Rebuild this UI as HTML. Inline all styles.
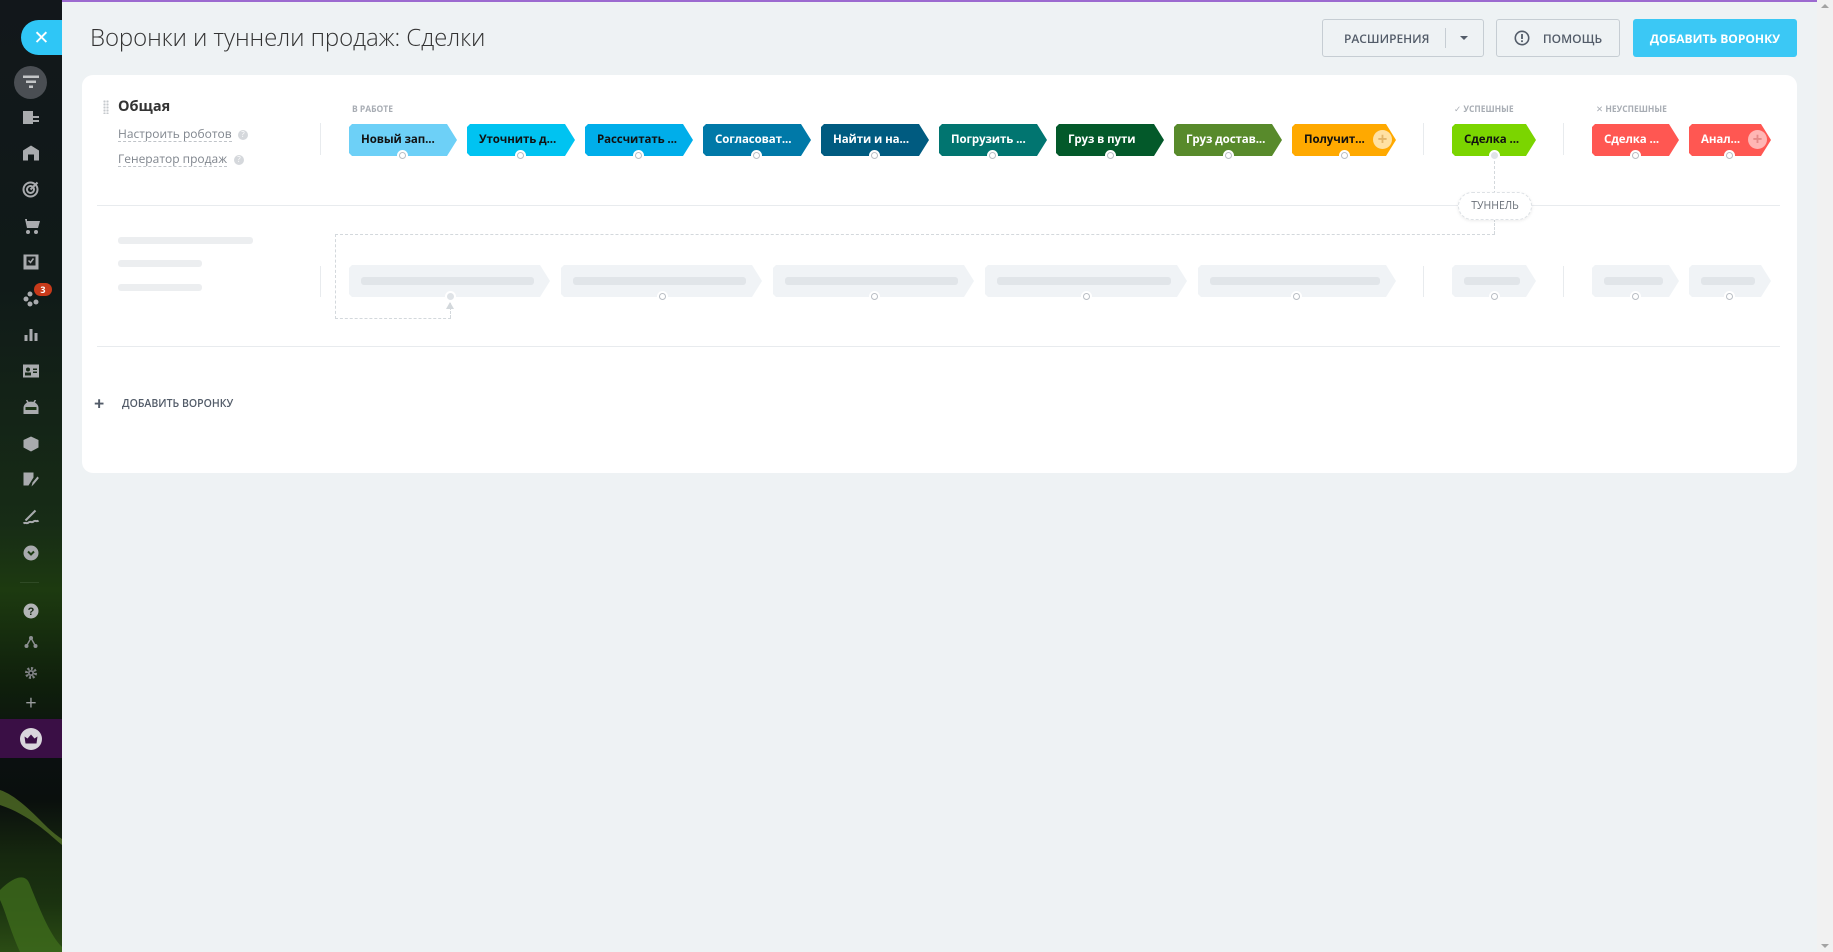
<!DOCTYPE html>
<html><head><meta charset="utf-8">
<style>
*{box-sizing:border-box;margin:0;padding:0}
body{width:1833px;height:952px;overflow:hidden;background:#eef2f4;font-family:"Open Sans","Liberation Sans","DejaVu Sans",sans-serif;position:relative}
.sb{position:absolute;left:0;top:0;width:62px;height:952px;background:linear-gradient(180deg,#12171b 0%,#101a18 30%,#172c16 55%,#1d3a10 62%,#0f1f0c 72%,#0b1010 80%,#0a0f0d 84%,#16280f 90%,#1b3310 95%,#2b4c14 100%);}
.ic{position:absolute;left:31px;transform:translate(-50%,-50%);color:#a9abae;}
.top{position:absolute;left:62px;top:0;right:0;height:2px;background:#9c6ad0}
.title{position:absolute;left:90px;top:21px;font-size:24px;color:#333;font-weight:300;letter-spacing:-0.1px}
.btn{position:absolute;top:19px;height:38px;border-radius:3px;font-size:12px;font-weight:bold;display:flex;align-items:center;justify-content:center;color:#535c69}
.card{position:absolute;left:82px;top:75px;width:1715px;height:398px;background:#fff;border-radius:11px}
.abs{position:absolute}
.st{position:absolute;height:32px;top:124px;clip-path:polygon(0 3px,3px 0,calc(100% - 10px) 0,100% 50%,calc(100% - 10px) 100%,3px 100%,0 calc(100% - 3px));font-size:11.5px;font-weight:bold;line-height:32px;padding-left:12px;white-space:nowrap;color:#fff;border-radius:3px;letter-spacing:-0.1px}
.node{position:absolute;width:11px;height:11px;border-radius:50%;background:#fff;border:2px solid #fff}
.node::after{content:"";position:absolute;left:0;top:0;width:7px;height:7px;border-radius:50%;border:1px solid #b9bec4;box-sizing:border-box}
.ph{position:absolute;top:265px;height:32px;background:#f0f3f6;clip-path:polygon(0 3px,3px 0,calc(100% - 10px) 0,100% 50%,calc(100% - 10px) 100%,3px 100%,0 calc(100% - 3px))}
.ph i{position:absolute;left:12px;right:16px;top:12px;height:8px;background:#e1e5e9;border-radius:3px}
.lbl{position:absolute;top:104px;font-size:8.5px;color:#a8adb4;font-weight:bold}
.vd{position:absolute;width:1px;background:#e8ebee}
.bar{position:absolute;height:7px;background:#eceef0;border-radius:3px;left:118px}
.plus{position:absolute;width:19px;height:19px;border-radius:50%;top:130px;font-size:17px;line-height:18px;text-align:center;font-weight:bold}
</style></head><body>
<div class="sb">
  <div style="position:absolute;left:21px;top:20px;width:41px;height:35px;border-radius:18px 0 0 18px;background:#2fc6f6;color:#fff;font-size:19px;line-height:34px;text-align:center;padding-left:0px;">✕</div>
  <div style="position:absolute;left:14px;top:66px;width:33px;height:33px;border-radius:50%;background:#4a4e53"></div>
  <svg class="ic" style="top:82px" width="16" height="13" viewBox="0 0 16 13"><rect x="0" y="0" width="16" height="2.5" fill="#c4c6c8"/><rect x="3" y="5" width="10" height="2.5" fill="#c4c6c8"/><rect x="6" y="10" width="4" height="2.5" fill="#c4c6c8"/></svg>
  <svg class="ic" style="top:117px" width="16" height="16" viewBox="0 0 16 16" fill="#a9abae"><rect x="0" y="2" width="10" height="13"/><rect x="6" y="7" width="10" height="2"/><rect x="6" y="11" width="10" height="2"/></svg>
  <svg class="ic" style="top:153px" width="16" height="15" viewBox="0 0 16 15" fill="#a9abae"><path d="M0 5 8 0 16 5V15H11V9H5V15H0Z"/></svg>
  <svg class="ic" style="top:189px" width="17" height="17" viewBox="0 0 17 17" fill="none" stroke="#a9abae" stroke-width="2"><circle cx="8" cy="9" r="7"/><circle cx="8" cy="9" r="3.5"/><path d="M8 9 15 2"/></svg>
  <svg class="ic" style="top:226px" width="18" height="16" viewBox="0 0 18 16" fill="#a9abae"><path d="M0 1h3l2 9h11l2-7H5V1z"/><circle cx="6" cy="14" r="2"/><circle cx="14" cy="14" r="2"/></svg>
  <svg class="ic" style="top:262px" width="15" height="15" viewBox="0 0 15 15"><rect width="15" height="15" fill="#a9abae"/><rect x="3" y="2" width="9" height="9" fill="#1a2020"/><path d="M5 6l2 2 3-4" stroke="#a9abae" stroke-width="1.5" fill="none"/></svg>
  <svg class="ic" style="top:299px" width="16" height="16" viewBox="0 0 16 16" fill="#a9abae"><circle cx="3" cy="8" r="2.5"/><circle cx="7" cy="3" r="2.5"/><circle cx="7" cy="13" r="2.5"/><circle cx="13" cy="11" r="2.5"/></svg>
  <div style="position:absolute;left:34px;top:283px;width:18px;height:13px;border-radius:7px;background:#c83a1a;color:#fff;font-size:9px;font-weight:bold;text-align:center;line-height:13px">3</div>
  <svg class="ic" style="top:335px" width="13" height="12" viewBox="0 0 13 12" fill="#a9abae"><rect x="0" y="6" width="3" height="6"/><rect x="5" y="0" width="3" height="12"/><rect x="10" y="4" width="3" height="8"/></svg>
  <svg class="ic" style="top:371px" width="16" height="13" viewBox="0 0 16 13" fill="#a9abae"><rect width="16" height="13"/><circle cx="5" cy="5" r="2" fill="#172818"/><rect x="2" y="8" width="6" height="3" fill="#172818"/><rect x="10" y="4" width="4" height="1.5" fill="#172818"/><rect x="10" y="7" width="4" height="1.5" fill="#172818"/></svg>
  <svg class="ic" style="top:407px" width="17" height="14" viewBox="0 0 17 14" fill="#a9abae"><path d="M1 14V8a7 6 0 0 1 15 0v6z"/><rect x="3" y="7" width="11" height="3" fill="#1c3416"/><path d="M4 0 6 3M13 0 11 3" stroke="#a9abae" stroke-width="1.5"/></svg>
  <svg class="ic" style="top:444px" width="15" height="15" viewBox="0 0 15 15" fill="#a9abae"><path d="M7.5 0 15 3.5V11L7.5 15 0 11V3.5z"/></svg>
  <svg class="ic" style="top:480px" width="15" height="15" viewBox="0 0 15 15" fill="#a9abae"><path d="M0 0h10v5l-5 8H0z"/><path d="M8 14l1-4 5-6 1.5 1.5-5 6z"/></svg>
  <svg class="ic" style="top:517px" width="17" height="15" viewBox="0 0 17 15" fill="none" stroke="#a9abae" stroke-width="2"><path d="M3 11 13 1"/><path d="M1 14c2-2 3 1 5-1s3 1 5-1 3 1 5-1"/></svg>
  <svg class="ic" style="top:553px" width="15" height="15" viewBox="0 0 15 15"><circle cx="7.5" cy="7.5" r="7.5" fill="#a9abae"/><path d="M4.5 6 7.5 9 10.5 6" stroke="#1d3a14" stroke-width="2" fill="none"/></svg>
  <div style="position:absolute;left:20px;top:582px;width:19px;height:1px;background:#2f4a25"></div>
  <svg class="ic" style="top:611px" width="15" height="15" viewBox="0 0 15 15"><circle cx="7.5" cy="7.5" r="7.5" fill="#b3b5b7"/><text x="7.5" y="11.5" font-size="11" font-weight="bold" text-anchor="middle" fill="#1a2a16" font-family="Liberation Sans">?</text></svg>
  <svg class="ic" style="top:642px" width="13" height="12" viewBox="0 0 13 12" fill="#8d9092"><circle cx="6.5" cy="2" r="2"/><circle cx="2" cy="10" r="2"/><circle cx="11" cy="10" r="2"/><path d="M6.5 2 2 10M6.5 2 11 10" stroke="#8d9092" stroke-width="1.4"/></svg>
  <svg class="ic" style="top:673px" width="13" height="13" viewBox="0 0 13 13"><circle cx="6.5" cy="6.5" r="4.5" fill="none" stroke="#7f8284" stroke-width="3" stroke-dasharray="2 1.5"/><circle cx="6.5" cy="6.5" r="3" fill="#7f8284"/><circle cx="6.5" cy="6.5" r="1.3" fill="#0c1410"/></svg>
  <div class="ic" style="top:703px;color:#9a9d9f;font-size:20px;line-height:20px">+</div>
  <div style="position:absolute;left:0;top:719px;width:62px;height:39px;background:#3a0f45"></div>
  <svg class="ic" style="top:739px" width="23" height="23" viewBox="0 0 23 23"><circle cx="11.5" cy="11.5" r="11" fill="#d9d6dc"/><path d="M5 9l3 2 3.5-4 3.5 4 3-2-1 7H6z" fill="#3a0f45"/></svg>
  <svg style="position:absolute;left:0;top:780px" width="62" height="172" viewBox="0 0 62 172"><path d="M0 10c15 5 30 20 45 35 8 8 14 12 17 14v6C50 55 30 35 0 25z" fill="#5a7a2a" opacity=".7"/><path d="M0 110c10-10 25-20 30-5 10 25 20 50 32 62v5H20C10 150 5 130 0 120z" fill="#3d6a1c" opacity=".8"/></svg>
</div>
<div class="top"></div>
<div style="position:absolute;right:0;top:0;width:16px;height:952px;background:#f1f1f1"><div style="position:absolute;left:4px;top:4px;border:4px solid transparent;border-bottom:4px solid #a3a3a3;border-top:0"></div><div style="position:absolute;left:4px;bottom:4px;border:4px solid transparent;border-top:4px solid #a3a3a3;border-bottom:0"></div></div>
<div class="title">Воронки и туннели продаж: Сделки</div>
<div class="btn" style="left:1322px;width:162px;border:1px solid #c6cdd3;justify-content:flex-start;padding-left:21px;font-weight:600">РАСШИРЕНИЯ<span style="position:absolute;left:122px;top:8px;width:1px;height:20px;background:#c6cdd3"></span><span style="position:absolute;left:137px;top:16px;border:4px solid transparent;border-top:4px solid #535c69;border-bottom:0"></span></div>
<div class="btn" style="left:1496px;width:124px;border:1px solid #c6cdd3;font-weight:600"><svg width="16" height="16" viewBox="0 0 16 16" style="margin-right:13px"><circle cx="8" cy="8" r="6.7" fill="none" stroke="#535c69" stroke-width="1.6"/><rect x="7.1" y="4" width="1.8" height="5" fill="#535c69"/><rect x="7.1" y="10.3" width="1.8" height="1.8" fill="#535c69"/></svg>ПОМОЩЬ</div>
<div class="btn" style="left:1633px;width:164px;background:#3bc8f5;color:#fff">ДОБАВИТЬ ВОРОНКУ</div>

<div class="card"></div>
<div class="abs" style="left:103px;top:100px;width:6px;height:14px;background:radial-gradient(circle,#c5c9cd 1px,transparent 1.3px) 0 0/3px 3px"></div>
<div class="abs" style="left:118px;top:97px;font-size:14.5px;font-weight:bold;color:#333">Общая</div>
<div class="abs" style="left:118px;top:126px;font-size:12px;color:#80868e;border-bottom:1px dashed #c0c4c9;line-height:15px">Настроить роботов</div>
<div class="abs" style="left:238px;top:130px;width:10px;height:10px;border-radius:50%;background:#d5d8dc;color:#fff;font-size:8px;text-align:center;line-height:10px">?</div>
<div class="abs" style="left:118px;top:151px;font-size:12px;color:#80868e;border-bottom:1px dashed #c0c4c9;line-height:15px">Генератор продаж</div>
<div class="abs" style="left:234px;top:155px;width:10px;height:10px;border-radius:50%;background:#d5d8dc;color:#fff;font-size:8px;text-align:center;line-height:10px">?</div>
<div class="vd" style="left:320px;top:123px;height:32px"></div>
<div class="vd" style="left:1423px;top:123px;height:32px"></div>
<div class="vd" style="left:1563px;top:123px;height:32px"></div>
<div class="lbl" style="left:352px">В РАБОТЕ</div>
<div class="lbl" style="left:1454px">✓ УСПЕШНЫЕ</div>
<div class="lbl" style="left:1596px">✕ НЕУСПЕШНЫЕ</div>

<div class="st" style="left:349px;width:108px;background:#6dd0f7;color:#111">Новый зап...</div>
<div class="st" style="left:467px;width:108px;background:#00c3f1;color:#111">Уточнить д...</div>
<div class="st" style="left:585px;width:108px;background:#00aeea;color:#111">Рассчитать ...</div>
<div class="st" style="left:703px;width:108px;background:#0079a8">Согласоват...</div>
<div class="st" style="left:821px;width:108px;background:#005b80">Найти и на...</div>
<div class="st" style="left:939px;width:108px;background:#017570">Погрузить ...</div>
<div class="st" style="left:1056px;width:108px;background:#03592a">Груз в пути</div>
<div class="st" style="left:1174px;width:108px;background:#588a2b">Груз достав...</div>
<div class="st" style="left:1292px;width:104px;background:#ffa900;color:#111">Получит...</div>
<div class="plus" style="left:1373px;background:#ffe1a3;color:#e3b569">+</div>
<div class="st" style="left:1452px;width:84px;background:#7bd500;color:#111">Сделка ...</div>
<div class="st" style="left:1592px;width:87px;background:#ff5752">Сделка ...</div>
<div class="st" style="left:1689px;width:82px;background:#ff5752">Анал...</div>
<div class="plus" style="left:1748px;background:#ffb6b4;color:#e58a88">+</div>

<div class="node" style="left:397px;top:150px"></div>
<div class="node" style="left:515px;top:150px"></div>
<div class="node" style="left:633px;top:150px"></div>
<div class="node" style="left:751px;top:150px"></div>
<div class="node" style="left:869px;top:150px"></div>
<div class="node" style="left:987px;top:150px"></div>
<div class="node" style="left:1105px;top:150px"></div>
<div class="node" style="left:1223px;top:150px"></div>
<div class="node" style="left:1339px;top:150px"></div>
<div class="abs" style="left:1489px;top:150px;width:11px;height:11px;border-radius:50%;background:#dfe3e7;border:2px solid #fff"></div>
<div class="node" style="left:1630px;top:150px"></div>
<div class="node" style="left:1724px;top:150px"></div>

<div class="abs" style="left:97px;top:205px;width:1683px;height:1px;background:#e8ebee"></div>
<div class="abs" style="left:1494px;top:161px;width:0;height:33px;border-left:1px dashed #d3d8dc"></div>
<div class="abs" style="left:1494px;top:219px;width:0;height:15px;border-left:1px dashed #d3d8dc"></div>
<div class="abs" style="left:335px;top:234px;width:1160px;height:0;border-top:1px dashed #d3d8dc"></div>
<div class="abs" style="left:335px;top:234px;width:0;height:85px;border-left:1px dashed #d3d8dc"></div>
<div class="abs" style="left:335px;top:318px;width:116px;height:0;border-top:1px dashed #d3d8dc"></div>
<div class="abs" style="left:450px;top:303px;width:0;height:15px;border-left:1px dashed #d3d8dc"></div>
<div class="abs" style="left:446px;top:302px;border:4px solid transparent;border-bottom:7px solid #d3d8dc;border-top:0"></div>
<div class="abs" style="left:1458px;top:192px;width:74px;height:28px;border-radius:14px;background:#fff;border:1px dashed #dde1e5;box-shadow:0 1px 3px rgba(0,0,0,.08);font-size:10.5px;color:#6a7078;text-align:center;line-height:26px">ТУННЕЛЬ</div>

<div class="bar" style="top:237px;width:135px"></div>
<div class="bar" style="top:260px;width:84px"></div>
<div class="bar" style="top:284px;width:84px"></div>
<div class="vd" style="left:320px;top:266px;height:31px"></div>
<div class="vd" style="left:1423px;top:266px;height:31px"></div>
<div class="vd" style="left:1563px;top:266px;height:31px"></div>
<div class="ph" style="left:349px;width:201px"><i></i></div>
<div class="ph" style="left:561px;width:201px"><i></i></div>
<div class="ph" style="left:773px;width:201px"><i></i></div>
<div class="ph" style="left:985px;width:202px"><i></i></div>
<div class="ph" style="left:1198px;width:198px"><i></i></div>
<div class="ph" style="left:1452px;width:84px"><i></i></div>
<div class="ph" style="left:1592px;width:87px"><i></i></div>
<div class="ph" style="left:1689px;width:82px"><i></i></div>
<div class="abs" style="left:445px;top:291px;width:11px;height:11px;border-radius:50%;background:#dfe3e7;border:2px solid #fff"></div>
<div class="node" style="left:657px;top:291px"></div>
<div class="node" style="left:869px;top:291px"></div>
<div class="node" style="left:1081px;top:291px"></div>
<div class="node" style="left:1291px;top:291px"></div>
<div class="node" style="left:1489px;top:291px"></div>
<div class="node" style="left:1630px;top:291px"></div>
<div class="node" style="left:1724px;top:291px"></div>

<div class="abs" style="left:97px;top:346px;width:1683px;height:1px;background:#e8ebee"></div>
<div class="abs" style="left:94px;top:394px;font-size:18px;font-weight:bold;color:#535c69;line-height:20px">+</div>
<div class="abs" style="left:122px;top:397px;font-size:10.5px;color:#535c69;font-weight:600">ДОБАВИТЬ ВОРОНКУ</div>
</body></html>
